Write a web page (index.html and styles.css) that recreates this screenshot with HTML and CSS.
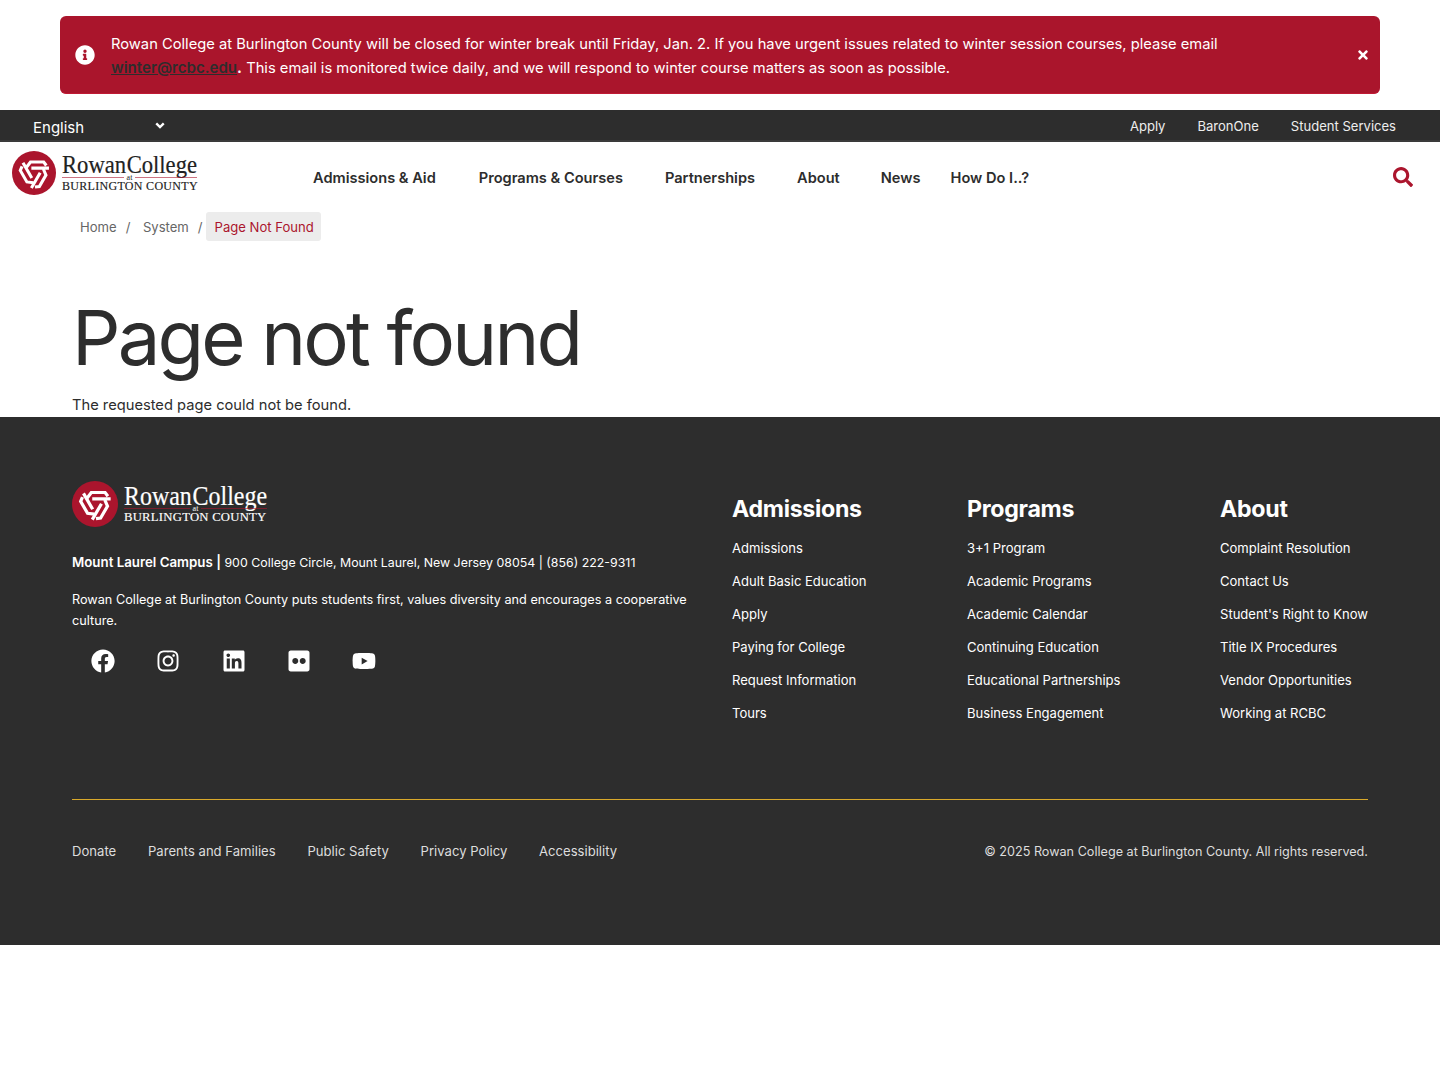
FILE: index.html
```html
<!DOCTYPE html>
<html lang="en">
<head>
<meta charset="utf-8">
<title>Page not found</title>
<link rel="stylesheet" href="styles.css">
</head>
<body>
<svg class="defs" width="0" height="0" aria-hidden="true">
  <symbol id="knot" viewBox="0 0 100 100">
    <circle cx="50" cy="50" r="50" fill="#ab152d"/>
    <g fill="none" stroke="#fff" stroke-width="7">
      <path id="arm-a" d="M33 37 L42 25 H72 L78 33 M44 39 H84"/>
      <use href="#arm-a" transform="rotate(120 51 50)"/>
      <use href="#arm-a" transform="rotate(240 51 50)"/>
    </g>
  </symbol>
</svg>

<section class="alert-wrap">
  <div class="alert">
    <svg class="alert-icon" viewBox="0 0 512 512"><path d="M256 8C119.043 8 8 119.083 8 256c0 136.997 111.043 248 248 248s248-111.003 248-248C504 119.083 392.957 8 256 8zm0 110c23.196 0 42 18.804 42 42s-18.804 42-42 42-42-18.804-42-42 18.804-42 42-42zm56 254c0 6.627-5.373 12-12 12h-88c-6.627 0-12-5.373-12-12v-24c0-6.627 5.373-12 12-12h12v-64h-12c-6.627 0-12-5.373-12-12v-24c0-6.627 5.373-12 12-12h64c6.627 0 12 5.373 12 12v100h12c6.627 0 12 5.373 12 12v24z"/></svg>
    <p class="alert-text">Rowan College at Burlington County will be closed for winter break until Friday, Jan. 2. If you have urgent issues related to winter session courses, please email <a href="#">winter@rcbc.edu</a><b>.</b> This email is monitored twice daily, and we will respond to winter course matters as soon as possible.</p>
    <svg class="alert-close" viewBox="0 0 352 512"><path d="M242.72 256l100.07-100.07c12.28-12.28 12.28-32.19 0-44.48l-22.24-22.24c-12.28-12.28-32.19-12.28-44.48 0L176 189.28 75.93 89.21c-12.28-12.28-32.19-12.28-44.48 0L9.21 111.45c-12.28 12.28-12.28 32.19 0 44.48L109.28 256 9.21 356.07c-12.28 12.28-12.28 32.19 0 44.48l22.24 22.24c12.28 12.28 32.2 12.28 44.48 0L176 322.72l100.07 100.07c12.28 12.28 32.2 12.28 44.48 0l22.24-22.24c12.28-12.28 12.28-32.19 0-44.48L242.72 256z"/></svg>
  </div>
</section>

<div class="topbar">
  <div class="lang"><span>English</span><svg class="chev" viewBox="0 0 12 8"><path d="M1.5 1.5 6 6l4.5-4.5"/></svg></div>
  <nav class="toplinks"><a href="#">Apply</a><a href="#">BaronOne</a><a href="#">Student Services</a></nav>
</div>

<header class="mainhead">
  <a class="logo" href="#">
    <svg class="logo-mark"><use href="#knot"/></svg>
    <span class="logo-type">
      <span class="logo-name"><span>Rowan</span><span>College</span></span>
      <span class="logo-at"><i></i><em>at</em><i></i></span>
      <span class="logo-county">BURLINGTON COUNTY</span>
    </span>
  </a>
  <nav class="mainnav">
    <a href="#">Admissions &amp; Aid</a>
    <a href="#">Programs &amp; Courses</a>
    <a href="#">Partnerships</a>
    <a href="#">About</a>
    <a href="#">News</a>
    <a href="#">How Do I..?</a>
  </nav>
  <svg class="search" viewBox="0 0 512 512"><path d="M505 442.7L405.3 343c-4.5-4.5-10.6-7-17-7H372c27.6-35.3 44-79.7 44-128C416 93.1 322.9 0 208 0S0 93.1 0 208s93.1 208 208 208c48.3 0 92.7-16.4 128-44v16.3c0 6.4 2.5 12.5 7 17l99.7 99.7c9.4 9.4 24.6 9.4 33.9 0l28.3-28.3c9.4-9.4 9.4-24.6.1-34zM208 336c-70.7 0-128-57.2-128-128 0-70.7 57.2-128 128-128 70.7 0 128 57.2 128 128 0 70.7-57.2 128-128 128z"/></svg>
</header>

<ol class="crumbs">
  <li><a href="#">Home</a></li>
  <li class="sep">/</li>
  <li><a href="#">System</a></li>
  <li class="sep">/</li>
  <li class="current">Page Not Found</li>
</ol>

<main class="content">
  <h1>Page not found</h1>
  <p>The requested page could not be found.</p>
</main>

<footer class="foot">
  <div class="foot-top">
    <div class="foot-about">
      <a class="logo logo-light" href="#">
        <svg class="logo-mark"><use href="#knot"/></svg>
        <span class="logo-type">
          <span class="logo-name"><span>Rowan</span><span>College</span></span>
          <span class="logo-at"><i></i><em>at</em><i></i></span>
          <span class="logo-county">BURLINGTON COUNTY</span>
        </span>
      </a>
      <p class="addr"><strong>Mount Laurel Campus |</strong> 900 College Circle, Mount Laurel, New Jersey 08054 | (856) 222-9311</p>
      <p class="mission">Rowan College at Burlington County puts students first, values diversity and encourages a cooperative culture.</p>
      <div class="social">
        <svg viewBox="0 0 512 512"><path d="M504 256C504 119 393 8 256 8S8 119 8 256c0 123.78 90.69 226.38 209.25 245V327.69h-63V256h63v-54.64c0-62.15 37-96.48 93.67-96.48 27.14 0 55.52 4.84 55.52 4.84v61h-31.28c-30.8 0-40.41 19.12-40.41 38.73V256h68.78l-11 71.69h-57.78V501C413.31 482.38 504 379.78 504 256z"/></svg>
        <svg viewBox="0 0 448 512"><path d="M224.1 141c-63.6 0-114.9 51.3-114.9 114.9s51.3 114.9 114.9 114.9S339 319.5 339 255.9 287.7 141 224.1 141zm0 189.6c-41.1 0-74.7-33.5-74.7-74.7s33.5-74.7 74.7-74.7 74.7 33.5 74.7 74.7-33.6 74.7-74.7 74.7zm146.4-194.3c0 14.9-12 26.8-26.8 26.8-14.9 0-26.8-12-26.8-26.8s12-26.8 26.8-26.8 26.8 12 26.8 26.8zm76.1 27.2c-1.7-35.9-9.9-67.7-36.2-93.9-26.2-26.2-58-34.4-93.9-36.2-37-2.1-147.9-2.1-184.9 0-35.8 1.7-67.6 9.9-93.9 36.1s-34.4 58-36.2 93.9c-2.1 37-2.1 147.9 0 184.9 1.7 35.9 9.9 67.7 36.2 93.9s58 34.4 93.9 36.2c37 2.1 147.9 2.1 184.9 0 35.9-1.7 67.7-9.9 93.9-36.2 26.2-26.2 34.4-58 36.2-93.9 2.1-37 2.1-147.8 0-184.8zM398.8 388c-7.8 19.6-22.9 34.7-42.6 42.6-29.5 11.7-99.5 9-132.1 9s-102.7 2.6-132.1-9c-19.6-7.8-34.7-22.9-42.6-42.6-11.7-29.5-9-99.5-9-132.1s-2.6-102.7 9-132.1c7.8-19.6 22.9-34.7 42.6-42.6 29.5-11.7 99.5-9 132.1-9s102.7-2.6 132.1 9c19.6 7.8 34.7 22.9 42.6 42.6 11.7 29.5 9 99.5 9 132.1s2.7 102.7-9 132.1z"/></svg>
        <svg viewBox="0 0 448 512"><path d="M416 32H31.9C14.3 32 0 46.5 0 64.3v383.4C0 465.5 14.3 480 31.9 480H416c17.6 0 32-14.5 32-32.3V64.3c0-17.8-14.4-32.3-32-32.3zM135.4 416H69V202.2h66.5V416zm-33.2-243c-21.3 0-38.5-17.3-38.5-38.5S80.9 96 102.2 96c21.2 0 38.5 17.3 38.5 38.5 0 21.3-17.2 38.5-38.5 38.5zm282.1 243h-66.4V312c0-24.8-.5-56.7-34.5-56.7-34.6 0-39.9 27-39.9 54.9V416h-66.4V202.2h63.7v29.2h.9c8.9-16.8 30.6-34.5 62.9-34.5 67.2 0 79.7 44.3 79.7 101.9V416z"/></svg>
        <svg viewBox="0 0 448 512"><path d="M400 32H48C21.5 32 0 53.5 0 80v352c0 26.5 21.5 48 48 48h352c26.5 0 48-21.5 48-48V80c0-26.5-21.5-48-48-48zM144.5 319c-35.1 0-63.5-28.4-63.5-63.5s28.4-63.5 63.5-63.5 63.5 28.4 63.5 63.5-28.4 63.5-63.5 63.5zm159 0c-35.1 0-63.5-28.4-63.5-63.5s28.4-63.5 63.5-63.5 63.5 28.4 63.5 63.5-28.4 63.5-63.5 63.5z"/></svg>
        <svg viewBox="0 0 576 512"><path d="M549.655 124.083c-6.281-23.65-24.787-42.276-48.284-48.597C458.781 64 288 64 288 64S117.22 64 74.629 75.486c-23.497 6.322-42.003 24.947-48.284 48.597-11.412 42.867-11.412 132.305-11.412 132.305s0 89.438 11.412 132.305c6.281 23.65 24.787 41.5 48.284 47.821C117.22 448 288 448 288 448s170.78 0 213.371-11.486c23.497-6.321 42.003-24.171 48.284-47.821 11.412-42.867 11.412-132.305 11.412-132.305s0-89.438-11.412-132.305zm-317.51 213.508V175.185l142.739 81.205-142.739 81.201z"/></svg>
      </div>
    </div>
    <div class="foot-col col-adm">
      <h2>Admissions</h2>
      <a href="#">Admissions</a><a href="#">Adult Basic Education</a><a href="#">Apply</a><a href="#">Paying for College</a><a href="#">Request Information</a><a href="#">Tours</a>
    </div>
    <div class="foot-col col-prog">
      <h2>Programs</h2>
      <a href="#">3+1 Program</a><a href="#">Academic Programs</a><a href="#">Academic Calendar</a><a href="#">Continuing Education</a><a href="#">Educational Partnerships</a><a href="#">Business Engagement</a>
    </div>
    <div class="foot-col col-about">
      <h2>About</h2>
      <a href="#">Complaint Resolution</a><a href="#">Contact Us</a><a href="#">Student's Right to Know</a><a href="#">Title IX Procedures</a><a href="#">Vendor Opportunities</a><a href="#">Working at RCBC</a>
    </div>
  </div>
  <div class="foot-bottom">
    <nav class="legal"><a href="#">Donate</a><a href="#">Parents and Families</a><a href="#">Public Safety</a><a href="#">Privacy Policy</a><a href="#">Accessibility</a></nav>
    <p class="copy">© 2025 Rowan College at Burlington County. All rights reserved.</p>
  </div>
</footer>
</body>
</html>
```

FILE: styles.css
```css
* { box-sizing: border-box; }
html, body { margin: 0; padding: 0; background: #fff; }
body { font-family: Inter, "Liberation Sans", sans-serif; color: #2d2d2d; }
a { color: inherit; text-decoration: none; }
p, h1, h2, ol { margin: 0; padding: 0; }
.defs { display: block; height: 0; }

.alert-wrap { padding: 16px 60px; }
.alert { display: flex; align-items: center; height: 78px; padding: 0 10px 0 15px; background: #aa152c; border-radius: 6px; border-bottom: 1px solid #c01a34; color: #fff; }
.alert-icon { width: 20px; height: 20px; fill: #fff; flex: none; }
.alert-text { flex: 1; margin-left: 16px; font-size: 14.72px; line-height: 24px; max-width: 1120px; padding-top: 3px; }
.alert-text a { color: #2d2d2d; font-size: 15.1px; font-weight: 600; text-decoration: underline; }
.alert-close { width: 10px; height: 14px; fill: #fff; margin-left: auto; margin-right: 2px; flex: none; }

.topbar { display: flex; justify-content: space-between; align-items: center; height: 32px; padding: 2px 44px 0 33px; background: #2d2d2d; border-bottom: 2px solid #3a3a3a; color: #fff; }
.lang { display: flex; align-items: center; justify-content: space-between; width: 132px; font-size: 15px; padding-top: 2px; }
.chev { width: 10px; height: 7px; margin-top: -4px; fill: none; stroke: #fff; stroke-width: 2.8; }
.toplinks { display: flex; gap: 32px; font-size: 13.05px; color: #eee; }

.mainhead { display: flex; align-items: flex-start; height: 70px; padding-left: 12px; padding-right: 27px; }
.logo { display: flex; align-items: center; gap: 6px; color: #222; }
.mainhead .logo { margin-top: 9px; width: 301px; }
.logo-mark { width: 44px; height: 44px; flex: none; }
.logo-type { display: flex; flex-direction: column; width: 135px; font-family: "Liberation Serif", serif; }
.logo-name { display: flex; justify-content: space-between; width: 155.2px; font-size: 26px; line-height: 22px; transform: scaleX(.87); transform-origin: left center; -webkit-text-stroke: .2px currentColor; }
.logo-at { display: flex; align-items: center; gap: 3px; height: 4px; }
.logo-at i { flex: 1; height: 1px; background: #ab152d; opacity: .6; }
.logo-at em { font-style: normal; font-size: 8px; line-height: 4px; }
.logo-county { font-size: 12px; line-height: 13px; white-space: nowrap; letter-spacing: .3px; -webkit-text-stroke: .15px currentColor; }
.mainnav { display: flex; margin-top: 28px; font-size: 14.6px; font-weight: 600; line-height: 17px; color: #2d2d2d; }
.mainnav a { margin-right: 42px; }
.mainnav a:nth-child(1) { margin-right: 43px; }
.mainnav a:nth-child(4) { margin-right: 41px; }
.mainnav a:nth-child(5) { margin-right: 30px; }
.search { width: 20px; height: 20px; fill: #ab152d; margin-left: auto; margin-top: 25px; }

.crumbs { display: flex; align-items: center; list-style: none; height: 29px; padding-left: 80px; font-size: 13.1px; color: #666; }
.crumbs .sep { margin: 0 12.5px 0 9px; }
.crumbs .current { height: 29px; line-height: 30px; padding: 0 7px 0 9px; margin-left: -9.5px; background: #ececec; border-radius: 3px; color: #ab152d; }

.content { padding: 52px 72px 0; }
h1 { font-size: 76px; font-weight: 400; line-height: 88px; letter-spacing: -2.85px; color: #2d2d2d; }
.content p { font-size: 14.7px; line-height: 23px; margin-top: 13px; }

.foot { height: 528px; background: #2d2d2d; color: #fff; padding: 64px 72px 0; }
.foot-top { display: flex; height: 319px; border-bottom: 1px solid #d9a92b; }
.foot-about { width: 660px; }
.logo-light { color: #fff; }
.logo-light .logo-mark { width: 46px; height: 46px; }
.logo-light .logo-type { width: 143px; }
.logo-light .logo-name { font-size: 27.5px; width: 164.4px; }
.logo-light .logo-county { font-size: 12.7px; letter-spacing: .25px; }
.addr { margin-top: 25px; font-size: 12.38px; line-height: 21px; }
.addr strong { font-size: 13.3px; font-weight: 600; }
.mission { margin-top: 16px; font-size: 12.7px; line-height: 21px; }
.social { display: flex; gap: 41.3px; margin: 18px 0 0 19px; align-items: center; }
.social svg { width: 24px; height: 24px; fill: #fff; flex: none; }

.foot-col { display: flex; flex-direction: column; padding-top: 13px; }
.foot-col h2 { font-size: 23.2px; font-weight: 700; line-height: 30px; margin-bottom: 16px; letter-spacing: -.3px; }
.foot-col a { font-size: 13.05px; line-height: 17px; margin-bottom: 16px; }
.col-adm { margin-right: 99px; width: 136px; }
.col-prog { margin-right: 99px; width: 154px; }
.col-about { margin-left: auto; }

.foot-bottom { display: flex; justify-content: space-between; align-items: center; padding-top: 43px; font-size: 13.1px; line-height: 17px; color: #ddd; }
.legal { display: flex; gap: 31.8px; }
.copy { font-size: 12.64px; }
```
